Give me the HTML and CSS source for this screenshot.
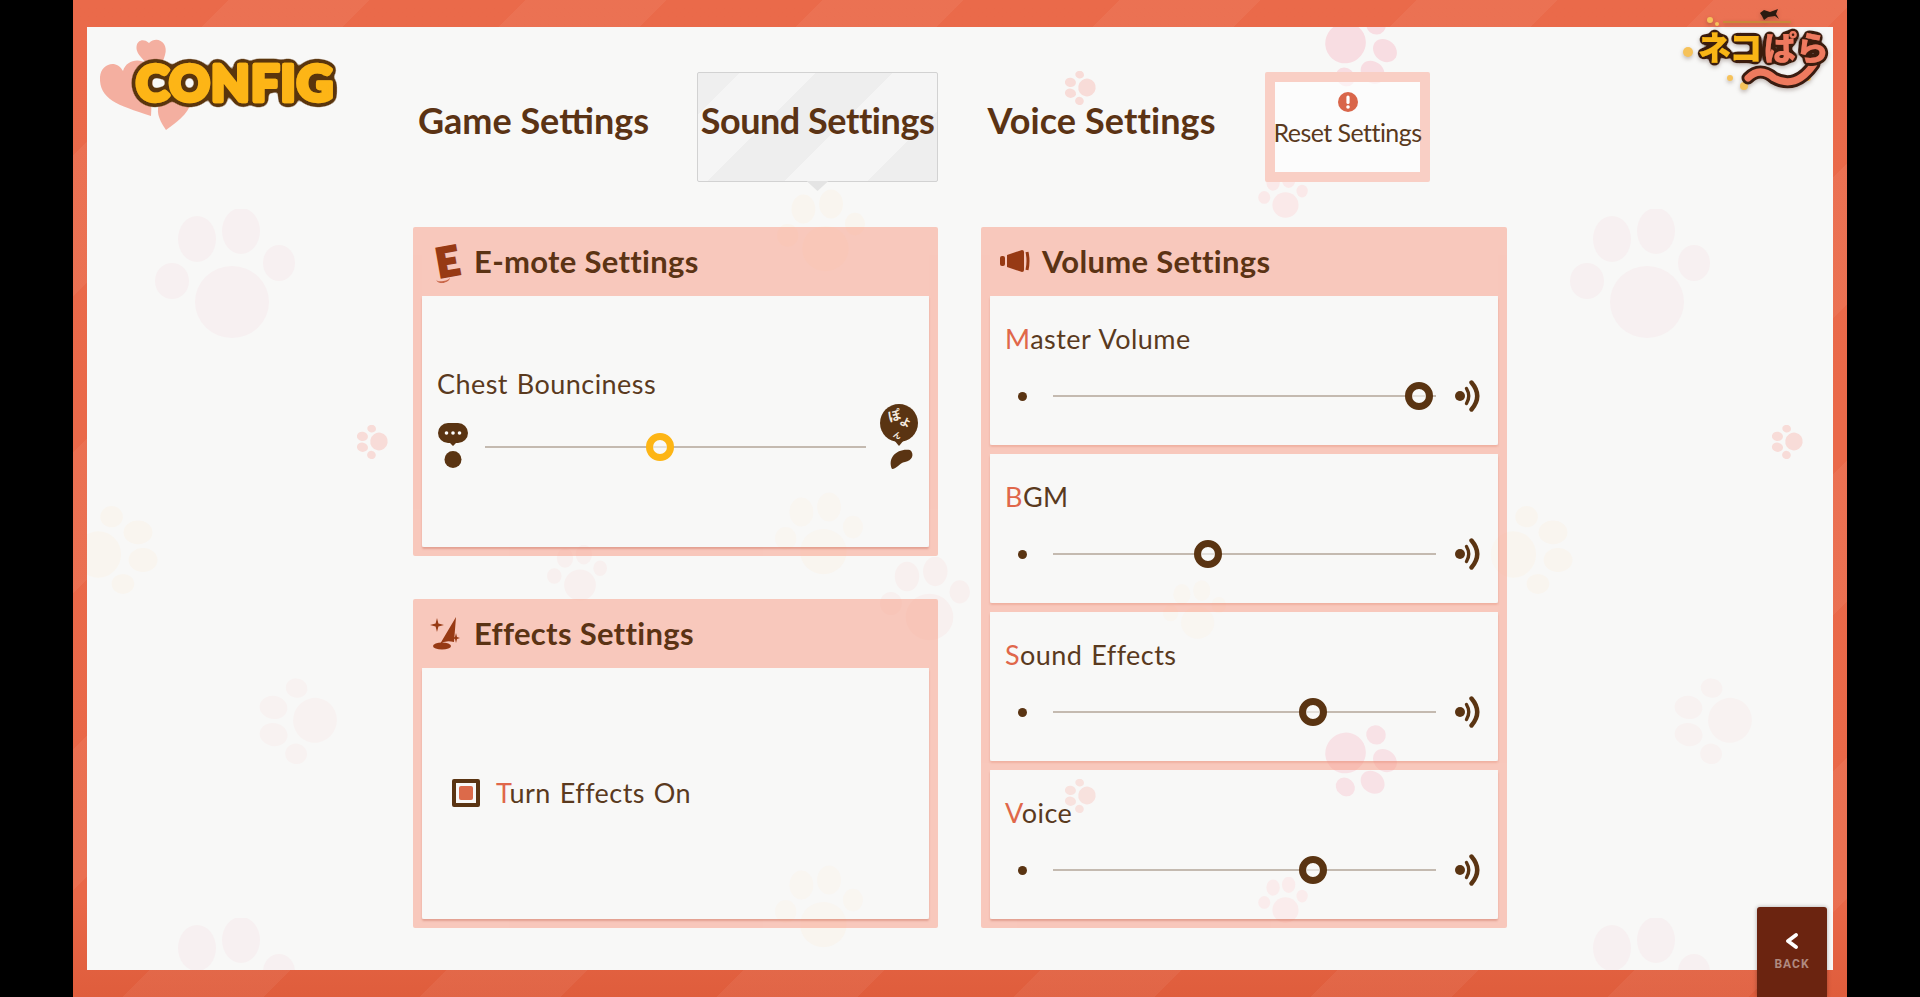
FILE: index.html
```html
<!DOCTYPE html>
<html lang="en">
<head>
<meta charset="utf-8">
<title>Config</title>
<link rel="stylesheet" href="styles.css">
</head>
<body>
<svg class="defs" width="0" height="0" aria-hidden="true">
  <defs>
    <symbol id="paw" viewBox="0 0 140 130">
      <ellipse cx="77" cy="93" rx="37" ry="36"/>
      <ellipse cx="42" cy="30" rx="19" ry="23"/>
      <ellipse cx="86" cy="22" rx="19" ry="23"/>
      <ellipse cx="124" cy="54" rx="16" ry="18"/>
      <ellipse cx="17" cy="72" rx="17" ry="18"/>
    </symbol>
    <symbol id="speaker" viewBox="0 0 26 32">
      <circle cx="5" cy="16" r="5" fill="#5a3412"/>
      <path d="M11.5 8.5 Q16 16 11.5 23.5" fill="none" stroke="#5a3412" stroke-width="3.4" stroke-linecap="round"/>
      <path d="M16.5 2.5 Q28 16 16.5 29.5" fill="none" stroke="#5a3412" stroke-width="4.4" stroke-linecap="round"/>
    </symbol>
    <filter id="outline-config" x="-10%" y="-30%" width="120%" height="160%">
      <feGaussianBlur in="SourceAlpha" stdDeviation="3.4"/>
      <feComponentTransfer result="grown"><feFuncA type="linear" slope="14" intercept="-1"/></feComponentTransfer>
      <feFlood flood-color="#5a3510"/>
      <feComposite in2="grown" operator="in"/>
      <feMerge><feMergeNode/><feMergeNode in="SourceGraphic"/></feMerge>
    </filter>
    <filter id="outline-logo" x="-10%" y="-30%" width="120%" height="160%">
      <feGaussianBlur in="SourceAlpha" stdDeviation="2.8"/>
      <feComponentTransfer result="grown"><feFuncA type="linear" slope="14" intercept="-1"/></feComponentTransfer>
      <feFlood flood-color="#3a1c10"/>
      <feComposite in2="grown" operator="in"/>
      <feMerge><feMergeNode/><feMergeNode in="SourceGraphic"/></feMerge>
    </filter>
  </defs>
</svg>

<main class="frame">
  <div class="sheet">
    <div class="paws" aria-hidden="true">
      <svg class="paw big p1"><use href="#paw"/></svg>
      <svg class="paw big p2"><use href="#paw"/></svg>
      <svg class="paw big p3"><use href="#paw"/></svg>
      <svg class="paw big p4"><use href="#paw"/></svg>
      <svg class="paw med p5"><use href="#paw"/></svg>
      <svg class="paw med p6"><use href="#paw"/></svg>
      <svg class="paw tiny p7"><use href="#paw"/></svg>
      <svg class="paw tiny p8"><use href="#paw"/></svg>
      <svg class="paw tiny p9"><use href="#paw"/></svg>
      <svg class="paw tiny p10"><use href="#paw"/></svg>
      <svg class="paw rosy p11"><use href="#paw"/></svg>
      <svg class="paw rosy p12"><use href="#paw"/></svg>
      <svg class="paw soft p13"><use href="#paw"/></svg>
      <svg class="paw soft p14"><use href="#paw"/></svg>
      <svg class="paw soft p15"><use href="#paw"/></svg>
      <svg class="paw soft p22"><use href="#paw"/></svg>
      <svg class="paw cream p16"><use href="#paw"/></svg>
      <svg class="paw cream p17"><use href="#paw"/></svg>
      <svg class="paw cream p18"><use href="#paw"/></svg>
      <svg class="paw cream p19"><use href="#paw"/></svg>
      <svg class="paw cream p20"><use href="#paw"/></svg>
      <svg class="paw cream p21"><use href="#paw"/></svg>
    </div>

    <header class="topbar">
      <div class="config-logo">
        <svg class="config-art" viewBox="0 0 326 110">
          <path class="heart" d="M53 29 C45 20 52 8 62 16 C70 8 82 16 78 28 L71 50 Z"/>
          <path class="heart" d="M64 89 C30 78 12 72 13 50 C14 36 30 32 36 44 C40 30 60 30 66 44 Z"/>
          <path class="heart" d="M79 103 C70 90 70 84 72 76 L105 70 C104 84 94 92 79 103 Z"/>
          <text class="config-word" x="49" y="74" textLength="197" filter="url(#outline-config)">CONFIG</text>
        </svg>
      </div>
      <nav class="tabs">
        <div class="tab">Game Settings</div>
        <div class="tab tab-active">Sound Settings</div>
        <div class="tab tab-voice">Voice Settings</div>
        <div class="tab-reset">
          <svg class="reset-icon" viewBox="0 0 20 20">
            <circle cx="10" cy="10" r="10" fill="#d9664a"/>
            <rect x="8.4" y="3.5" width="3.2" height="8.5" rx="1.6" fill="#fff"/>
            <circle cx="10" cy="15" r="1.8" fill="#fff"/>
          </svg>
          <span class="reset-label">Reset Settings</span>
        </div>
      </nav>
    </header>

    <div class="columns">
      <div class="column">
        <section class="panel">
          <h2 class="panel-title">
            <span class="title-icon"><span class="e-icon">E</span></span>
            E-mote Settings
          </h2>
          <div class="card card-chest">
            <div class="label">Chest Bounciness</div>
            <div class="slider chest-slider">
              <svg class="chest-small" viewBox="0 0 36 90">
                <path fill="#5a3412" d="M13 21 H23 A10 10 0 0 1 23 41 H21 L18 44 L15 41 H13 A10 10 0 0 1 13 21 Z"/>
                <circle cx="11.5" cy="31" r="1.8" fill="#fff"/>
                <circle cx="18" cy="31" r="1.8" fill="#fff"/>
                <circle cx="24.5" cy="31" r="1.8" fill="#fff"/>
                <circle cx="18" cy="57.5" r="8.5" fill="#5a3412"/>
              </svg>
              <div class="track track-chest"><span class="knob knob-gold" style="left:46%"></span></div>
              <svg class="chest-big" viewBox="0 0 40 90">
                <circle cx="20" cy="21" r="19" fill="#5a3412"/>
                <path fill="#5a3412" d="M15 38 H25 L20 44 Z"/>
                <text class="poyon" x="9" y="19" transform="rotate(-15 14 14)">ぽ</text>
                <text class="poyon poyon-mid" x="21" y="24" transform="rotate(25 26 20)">よ</text>
                <text class="poyon poyon-low" x="15" y="36" transform="rotate(25 18 32)">ん</text>
                <path fill="#5a3412" d="M13 67 C8 56 18 46 31 48 C36 52 33 59 26 60 C20 61 18 67 13 67 Z"/>
              </svg>
            </div>
          </div>
        </section>

        <section class="panel">
          <h2 class="panel-title">
            <span class="title-icon">
              <svg class="fx-icon" viewBox="0 0 30 34">
                <path fill="#973a14" d="M26 1 L24 26 Q15 24 10 28 Z"/>
                <ellipse cx="12" cy="30" rx="9" ry="3.6" fill="#973a14"/>
                <path fill="#973a14" d="M7 2 L8.4 7.6 L14 9 L8.4 10.4 L7 16 L5.6 10.4 L0 9 L5.6 7.6 Z"/>
                <path fill="#973a14" d="M26 17 L27 21 L30 22 L27 23 L26 27 L25 23 L22 22 L25 21 Z"/>
              </svg>
            </span>
            Effects Settings
          </h2>
          <div class="card card-effects">
            <span class="checkbox"><span class="checkbox-fill"></span></span>
            <div class="label">Turn Effects On</div>
          </div>
        </section>
      </div>

      <div class="column">
        <section class="panel panel-volume">
          <h2 class="panel-title">
            <span class="title-icon">
              <svg class="mega-icon" viewBox="0 0 30 22">
                <rect x="0" y="6" width="5" height="10" rx="2" fill="#973a14"/>
                <path fill="#973a14" d="M7 5 L22 0 Q24 0 24 2 V20 Q24 22 22 22 L7 17 Z"/>
                <path fill="none" stroke="#973a14" stroke-width="3" d="M27 2 Q29 11 27 20"/>
              </svg>
            </span>
            Volume Settings
          </h2>
          <div class="rows">
            <div class="card row">
              <div class="label">Master Volume</div>
              <div class="slider">
                <span class="dot"></span>
                <div class="track"><span class="knob" style="left:95.6%"></span></div>
                <svg class="speaker"><use href="#speaker"/></svg>
              </div>
            </div>
            <div class="card row">
              <div class="label">BGM</div>
              <div class="slider">
                <span class="dot"></span>
                <div class="track"><span class="knob" style="left:40.4%"></span></div>
                <svg class="speaker"><use href="#speaker"/></svg>
              </div>
            </div>
            <div class="card row">
              <div class="label">Sound Effects</div>
              <div class="slider">
                <span class="dot"></span>
                <div class="track"><span class="knob" style="left:68%"></span></div>
                <svg class="speaker"><use href="#speaker"/></svg>
              </div>
            </div>
            <div class="card row">
              <div class="label">Voice</div>
              <div class="slider">
                <span class="dot"></span>
                <div class="track"><span class="knob" style="left:68%"></span></div>
                <svg class="speaker"><use href="#speaker"/></svg>
              </div>
            </div>
          </div>
        </section>
      </div>
    </div>
  </div>

  <div class="game-logo">
    <svg class="game-art" viewBox="0 0 170 90">
      <path fill="#2b1a10" d="M80 5 L84 2 L90 4 L98 1 L96 6 L99 11 L95 8 L88 9 L84 12 L82 8 Z"/>
      <rect x="43" y="13" width="68" height="2" fill="#c98a3a"/>
      <g fill="#f6c25a">
        <circle cx="30" cy="12" r="3"/><circle cx="37" cy="16" r="2"/>
        <circle cx="8" cy="44" r="5"/><circle cx="50" cy="70" r="3"/>
        <circle cx="64" cy="78" r="4"/><circle cx="128" cy="70" r="3"/>
      </g>
      <path fill="none" stroke="#3a1c10" stroke-width="13" stroke-linecap="round" d="M68 70 Q80 58 94 70 Q116 82 134 56"/>
      <path fill="none" stroke="#ee7a5e" stroke-width="7" stroke-linecap="round" d="M68 70 Q80 58 94 70 Q116 82 134 56"/>
      <g filter="url(#outline-logo)">
        <text class="logo-kana logo-neko" x="18" y="52">ネコ</text>
        <text class="logo-kana logo-para" x="84" y="52">ぱら</text>
      </g>
    </svg>
  </div>

  <div class="back">
    <svg class="back-icon" viewBox="0 0 14 16">
      <path d="M11 2 L3 8 L11 14" fill="none" stroke="#fff" stroke-width="3.8" stroke-linecap="round" stroke-linejoin="round"/>
    </svg>
    <span class="back-label">BACK</span>
  </div>
</main>
</body>
</html>
```

FILE: styles.css
```css
* { box-sizing: border-box; }

html, body {
  margin: 0;
  height: 997px;
  overflow: hidden;
  background: #000;
}

body {
  font-family: "Lato", "Noto Sans", sans-serif;
  color: #5a3a1e;
}

.defs { position: absolute; }

.frame {
  position: relative;
  width: 1774px;
  height: 997px;
  margin-left: 73px;
  padding: 27px 14px;
  background:
    repeating-linear-gradient(135deg, rgba(255, 255, 255, 0) 0 110px, rgba(255, 255, 255, .05) 110px 210px),
    linear-gradient(180deg, #ea6a4a 0, #e96848 90%, #df5d3c 100%);
  overflow: hidden;
}

.sheet {
  position: relative;
  width: 1746px;
  height: 943px;
  background: #f8f8f7;
  overflow: hidden;
}

/* decorative paw prints under the content */
.paws { position: absolute; inset: 0; }
.paw { position: absolute; display: block; fill: currentColor; }
.big { width: 140px; height: 130px; color: #f7f0f1; }
.med { width: 85px; height: 85px; color: #f8f2f1; transform: rotate(-80deg); }
.tiny { width: 34px; height: 32px; color: #f8dcd8; transform: rotate(-80deg); }
.rosy { width: 78px; height: 76px; color: #f8dde2; transform: rotate(130deg); }
.soft { width: 50px; height: 46px; color: #fae9e9; }
.cream { width: 88px; height: 88px; color: #f9f5ef; }

.p1 { left: 68px; top: 182px; }
.p2 { left: 1483px; top: 182px; }
.p3 { left: 68px; top: 891px; }
.p4 { left: 1483px; top: 891px; }
.p5 { left: 168px; top: 652px; }
.p6 { left: 1583px; top: 652px; }
.p7 { left: 268px; top: 399px; }
.p8 { left: 1683px; top: 399px; }
.p9 { left: 976px; top: 45px; }
.p10 { left: 976px; top: 753px; }
.p11 { left: 1234px; top: 695px; }
.p12 { left: 1234px; top: -15px; }
.p13 { left: 1171px; top: 145px; }
.p14 { left: 1171px; top: 850px; }
.p15 { left: 793px; top: 530px; width: 90px; height: 84px; color: #f8f0ef; }
.p22 { left: 460px; top: 518px; width: 60px; height: 56px; color: #f8f0ef; }
.p16 { left: -15px; top: 479px; transform: rotate(90deg); }
.p17 { left: 1400px; top: 479px; transform: rotate(90deg); }
.p18 { left: 690px; top: 160px; }
.p19 { left: 688px; top: 463px; }
.p20 { left: 688px; top: 836px; }
.p21 { left: 1076px; top: 553px; width: 63px; height: 60px; }

/* top bar */
.topbar {
  position: relative;
  display: flex;
  height: 200px;
}

.config-logo { flex: 0 0 326px; }
.config-art { display: block; width: 326px; height: 110px; overflow: visible; }
.heart { fill: #f4afa0; }
.config-word {
  font-family: "Lato", sans-serif;
  font-weight: 900;
  font-size: 50px;
  fill: #fdb515;
  stroke: #fdb515;
  stroke-width: 4.5px;
  stroke-linejoin: round;
}

.tabs {
  display: flex;
  gap: 43px;
  height: 110px;
  margin-top: 45px;
}

.tab {
  position: relative;
  display: flex;
  align-items: center;
  justify-content: center;
  width: 241px;
  padding-bottom: 15px;
  font-size: 36px;
  font-weight: 700;
  white-space: nowrap;
  color: #5b3314;
}

.tab-voice { letter-spacing: .1px; }

.tab-active {
  border: 1px solid #d2d2d2;
  border-radius: 2px;
  letter-spacing: -.45px;
  background:
    linear-gradient(135deg, #efefef 0 12%, #f5f5f5 12% 34%, #eeeeee 34% 56%, #f5f5f5 56% 80%, #eeeeee 80%);
}

.tab-active::after {
  content: "";
  position: absolute;
  left: 50%;
  bottom: -10px;
  width: 22px;
  height: 10px;
  margin-left: -11px;
  background: #e4e4e4;
  clip-path: polygon(0 0, 100% 0, 50% 100%);
}

.tab-reset {
  display: flex;
  flex-direction: column;
  align-items: center;
  width: 165px;
  padding-top: 10px;
  border: 10px solid #f9cfc5;
  border-radius: 2px;
  background: rgba(255, 255, 255, .6);
}

.reset-icon { display: block; width: 20px; height: 20px; }

.reset-label {
  margin-top: 5px;
  font-size: 25px;
  line-height: 30px;
  letter-spacing: -.55px;
  white-space: nowrap;
}

/* panels */
.columns {
  position: relative;
  display: flex;
  gap: 43px;
  margin-left: 326px;
}

.column {
  display: flex;
  flex-direction: column;
  gap: 43px;
  width: 525px;
}

.column + .column { width: 526px; }

.panel {
  display: flex;
  flex-direction: column;
  height: 329px;
  border: solid rgba(248, 165, 145, .58);
  border-width: 0 9px 9px;
  border-radius: 2px;
}

.panel-volume { height: 701px; }

.panel-title {
  display: flex;
  align-items: center;
  flex: 0 0 69px;
  margin: 0;
  padding: 0 0 2px 10px;
  font-size: 31px;
  font-weight: 700;
  letter-spacing: .3px;
  color: #5b3314;
  white-space: nowrap;
  background: rgba(248, 165, 145, .58);
}

.title-icon {
  display: flex;
  align-items: center;
  justify-content: center;
  flex: 0 0 30px;
  height: 48px;
  margin-right: 12px;
}

.e-icon {
  position: relative;
  font-size: 40px;
  font-weight: 900;
  line-height: 1;
  letter-spacing: 0;
  color: #973a14;
  -webkit-text-stroke: 2.5px #973a14;
  transform: rotate(-10deg);
}

.e-icon::after {
  content: "";
  position: absolute;
  left: -3px;
  bottom: -1px;
  width: 14px;
  height: 7px;
  border-bottom: 2px solid #c9674a;
  border-radius: 0 0 50% 50%;
}

.fx-icon { width: 30px; height: 34px; margin-left: -4px; }
.mega-icon { width: 30px; height: 22px; }

.card {
  position: relative;
  border-radius: 2px;
  background: rgba(250, 250, 249, .2);
  box-shadow: 0 2px 2px rgba(190, 90, 70, .35);
}

.label {
  font-size: 27px;
  line-height: 36px;
  letter-spacing: .45px;
  word-spacing: 1.5px;
  white-space: nowrap;
}

.card-chest {
  flex: 1;
  padding: 70px 0 0 13px;
}

.card-chest .label { margin-left: 2px; }

.card-effects {
  flex: 1;
  display: flex;
  align-items: center;
  gap: 16px;
  padding: 0 0 2px 30px;
}

.card-effects .label::first-letter,
.row .label::first-letter { color: #e0674a; }

.checkbox {
  display: flex;
  align-items: center;
  justify-content: center;
  width: 28px;
  height: 28px;
  border: 4px solid #5a3412;
  border-radius: 2px;
}

.checkbox-fill {
  width: 14px;
  height: 14px;
  border-radius: 2px;
  background: #dc6a4a;
}

.rows {
  flex: 1;
  display: flex;
  flex-direction: column;
  gap: 9px;
}

.row {
  height: 149px;
  padding: 25px 0 0 15px;
}

/* the pink strip between two rows */
.row:not(:last-child)::after {
  content: "";
  position: absolute;
  left: 0;
  right: 0;
  bottom: -9px;
  height: 9px;
  background: rgba(248, 165, 145, .58);
}

.slider {
  display: flex;
  align-items: center;
  height: 78px;
  margin-left: 13px;
}

.dot {
  flex: 0 0 9px;
  height: 9px;
  margin-right: 26px;
  border-radius: 50%;
  background: #5a3412;
}

.track {
  position: relative;
  flex: 0 0 383px;
  height: 2px;
  background: #c4bab0;
}

.knob {
  position: absolute;
  top: 50%;
  width: 28px;
  height: 28px;
  margin: -14px 0 0 -14px;
  border: 7px solid #5a3412;
  border-radius: 50%;
  background: rgba(250, 250, 249, .6);
}

.knob-gold {
  border-color: #fdb515;
}

.speaker {
  flex: 0 0 26px;
  width: 26px;
  height: 32px;
  margin-left: 19px;
}

.chest-slider {
  height: 90px;
  margin-left: 0;
}

.chest-small { flex: 0 0 36px; height: 90px; margin-right: 14px; }
.track-chest { flex-basis: 381px; }
.chest-big { flex: 0 0 40px; height: 90px; margin-left: 13px; }

.poyon {
  font-family: "Noto Sans CJK JP", sans-serif;
  font-size: 13px;
  font-weight: 700;
  fill: #f6ece0;
}

.poyon-mid { font-size: 11px; }
.poyon-low { font-size: 8px; }

/* top-right game logo */
.game-logo {
  position: absolute;
  left: 1607px;
  top: 8px;
  width: 170px;
  height: 90px;
  filter: drop-shadow(0 2px 2px rgba(60, 30, 20, .3));
}

.game-art { display: block; width: 170px; height: 90px; }

.logo-kana {
  font-family: "Noto Sans CJK JP", sans-serif;
  font-size: 33px;
  font-weight: 900;
  letter-spacing: -1px;
}

.logo-neko { fill: #f9b512; }
.logo-para { fill: #ee7a5e; }

/* back button */
.back {
  position: absolute;
  left: 1684px;
  top: 907px;
  display: flex;
  flex-direction: column;
  align-items: center;
  width: 70px;
  height: 90px;
  padding-top: 26px;
  border-radius: 3px 3px 0 0;
  background: #6b2410;
  box-shadow: 0 0 4px rgba(0, 0, 0, .3);
}

.back-icon { width: 14px; height: 16px; }

.back-label {
  margin-top: 8px;
  font-family: "Roboto", sans-serif;
  font-size: 12px;
  font-weight: 700;
  line-height: 14px;
  letter-spacing: 1px;
  color: #b08a80;
}
```
